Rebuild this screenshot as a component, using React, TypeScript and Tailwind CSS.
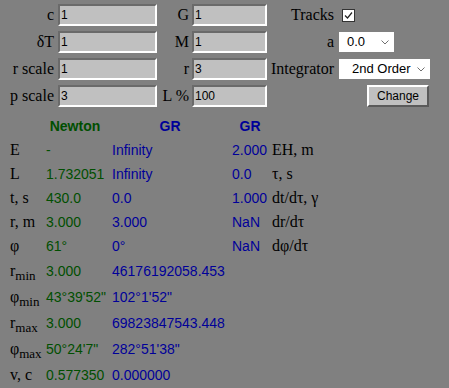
import React from 'react';

const serif = "font-['Liberation_Serif','Times_New_Roman',serif]";
const sans = "font-['Liberation_Sans',Arial,sans-serif]";

const Label = ({ children }: { children: React.ReactNode }) => (
  <div className={`${serif} text-[16px] text-black flex items-center justify-end`}>{children}</div>
);

const Field = ({ value }: { value: string }) => (
  <div
    className={`${sans} text-[12px] text-black bg-[#c0c0c0] border-2 border-t-[#6a6a6a] border-l-[#6a6a6a] border-r-white border-b-white pl-[1px] flex items-center`}
  >
    {value}
  </div>
);

const Chevron = () => (
  <svg width="8" height="5" viewBox="0 0 8 5" className="shrink-0">
    <path d="M0.5 0.5 L4 4 L7.5 0.5" fill="none" stroke="#707070" strokeWidth="1" />
  </svg>
);

const SelectBox = ({ value, width, pad }: { value: string; width: string; pad: string }) => (
  <div
    className={`${sans} ${width} ${pad} h-[20px] bg-white text-[13px] text-black flex items-center justify-between pr-[5px]`}
  >
    <span>{value}</span>
    <Chevron />
  </div>
);

type Row = {
  label: React.ReactNode;
  n: string;
  g: string;
  g2?: string;
  unit?: string;
};

const rows: Row[] = [
  { label: 'E', n: '-', g: 'Infinity', g2: '2.000', unit: 'EH, m' },
  { label: 'L', n: '1.732051', g: 'Infinity', g2: '0.0', unit: 'τ, s' },
  { label: 't, s', n: '430.0', g: '0.0', g2: '1.000', unit: 'dt/dτ, γ' },
  { label: 'r, m', n: '3.000', g: '3.000', g2: 'NaN', unit: 'dr/dτ' },
  { label: 'φ', n: '61°', g: '0°', g2: 'NaN', unit: 'dφ/dτ' },
];

const subRows: Row[] = [
  { label: <>r<sub className="text-[13px] bottom-[-0.35em]">min</sub></>, n: '3.000', g: '46176192058.453' },
  { label: <>φ<sub className="text-[13px] bottom-[-0.35em]">min</sub></>, n: '43°39\'52"', g: '102°1\'52"' },
  { label: <>r<sub className="text-[13px] bottom-[-0.35em]">max</sub></>, n: '3.000', g: '69823847543.448' },
  { label: <>φ<sub className="text-[13px] bottom-[-0.35em]">max</sub></>, n: '50°24\'7"', g: '282°51\'38"' },
  { label: 'v, c', n: '0.577350', g: '0.000000' },
];

const green = 'text-[#004f00]';
const blue = 'text-[#000099]';

function DataRow({ row, h }: { row: Row; h: string }) {
  return (
    <>
      <div className={`${serif} ${h} text-[16px] text-black flex items-center whitespace-nowrap`}>{row.label}</div>
      <div className={`${sans} ${h} ${green} text-[14px] flex items-center whitespace-nowrap`}>{row.n}</div>
      <div className={`${sans} ${h} ${blue} text-[14px] flex items-center whitespace-nowrap`}>{row.g}</div>
      <div className={`${sans} ${h} ${blue} text-[14px] flex items-center whitespace-nowrap`}>{row.g2 ?? ''}</div>
      <div className={`${serif} ${h} text-[16px] text-black flex items-center whitespace-nowrap`}>{row.unit ?? ''}</div>
    </>
  );
}

export default function App() {
  return (
    <div className="w-[449px] h-[388px] bg-[#808080] overflow-hidden">
      {/* Parameters */}
      <div className="grid grid-cols-[48px_99px_35px_75px_72px_91px] auto-rows-[22px] gap-y-[5px] pl-[10px] pt-[4px]">
        <div className="pr-[4px] flex justify-end"><Label>c</Label></div>
        <Field value="1" />
        <div className="pr-[3px] flex justify-end"><Label>G</Label></div>
        <Field value="1" />
        <div className="pr-[5px] flex justify-end"><Label>Tracks</Label></div>
        <div className="flex items-center">
          <div className="ml-[3px] w-[13px] h-[13px] bg-white border border-[#333] flex items-center justify-center">
            <svg width="11" height="11" viewBox="0 0 11 11">
              <path d="M2 5.5 L4.5 8 L9 2.5" fill="none" stroke="#222" strokeWidth="1.2" />
            </svg>
          </div>
        </div>

        <div className="pr-[4px] flex justify-end"><Label>δT</Label></div>
        <Field value="1" />
        <div className="pr-[3px] flex justify-end"><Label>M</Label></div>
        <Field value="1" />
        <div className="pr-[5px] flex justify-end"><Label>a</Label></div>
        <div className="flex items-center">
          <SelectBox value="0.0" width="w-[55px]" pad="pl-[8px]" />
        </div>

        <div className="pr-[4px] flex justify-end"><Label>r scale</Label></div>
        <Field value="1" />
        <div className="pr-[3px] flex justify-end"><Label>r</Label></div>
        <Field value="3" />
        <div className="pr-[5px] flex justify-end"><Label>Integrator</Label></div>
        <div className="flex items-center">
          <SelectBox value="2nd Order" width="w-[91px]" pad="pl-[13px]" />
        </div>

        <div className="pr-[4px] flex justify-end"><Label>p scale</Label></div>
        <Field value="3" />
        <div className="pr-[3px] flex justify-end"><Label>L %</Label></div>
        <Field value="100" />
        <div />
        <div className="flex justify-end pr-[1px]">
          <button
            className={`${sans} w-[62px] h-[22px] text-[12px] text-black bg-[#c0c0c0] border-2 border-t-white border-l-white border-r-[#5a5a5a] border-b-[#5a5a5a]`}
          >
            Change
          </button>
        </div>
      </div>

      {/* Results */}
      <div className="grid grid-cols-[36px_66px_120px_40px_1fr] pl-[10px] mt-[8px]">
        <div className="h-[23px]" />
        <div className={`${sans} h-[23px] ${green} text-[14px] font-bold flex items-center justify-center pr-[8px]`}>Newton</div>
        <div className={`${sans} h-[23px] ${blue} text-[14px] font-bold flex items-center justify-center pr-[4px]`}>GR</div>
        <div className={`${sans} h-[23px] ${blue} text-[14px] font-bold flex items-center justify-center pr-[4px]`}>GR</div>
        <div className="h-[23px]" />

        {rows.map((r, i) => (
          <DataRow key={i} row={r} h="h-[24px]" />
        ))}
        {subRows.map((r, i) => (
          <DataRow key={`s${i}`} row={r} h="h-[26px]" />
        ))}
      </div>
    </div>
  );
}
